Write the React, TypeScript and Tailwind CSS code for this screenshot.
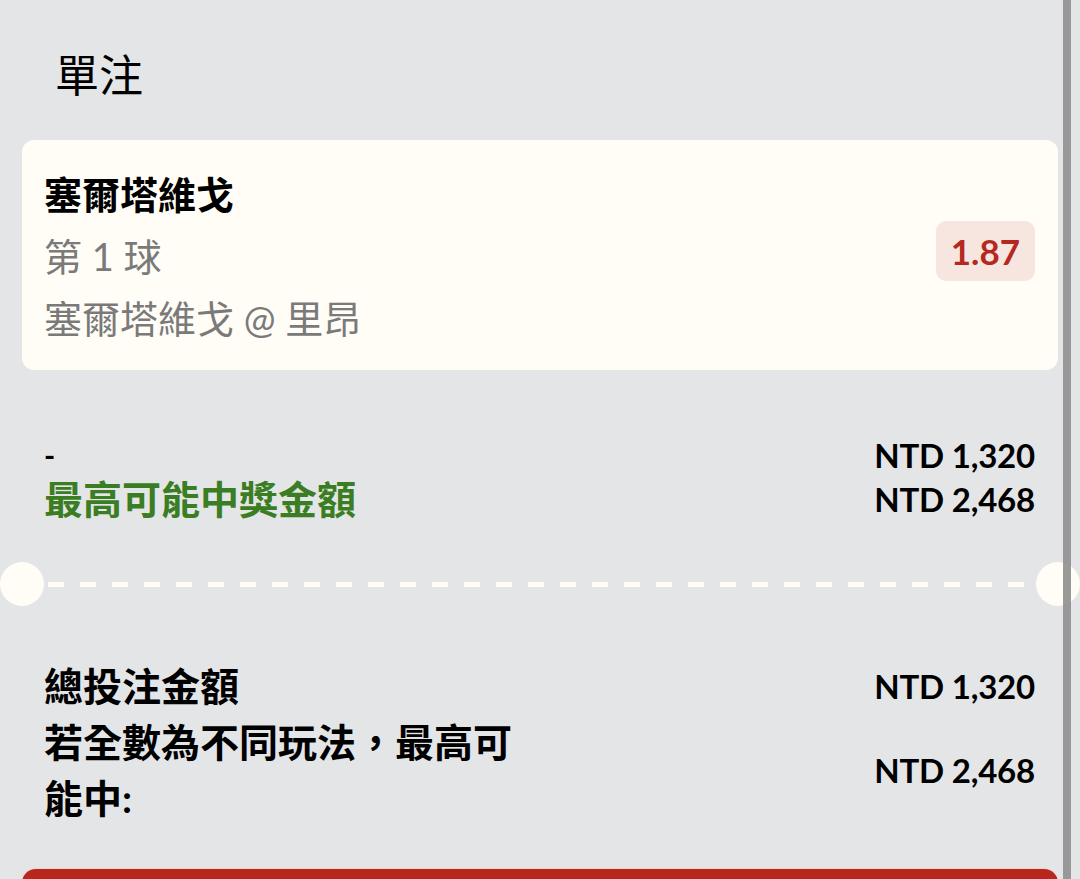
const latin = "font-['Lato','Noto_Sans_CJK_TC',sans-serif]"

const Amount = ({ children }: { children: React.ReactNode }) => (
  <span className="text-[33px] font-bold text-black tracking-[-0.2px]">{children}</span>
)

export default function App() {
  return (
    <div className={`relative h-[879px] overflow-hidden bg-[#e4e5e7] ${latin}`}>
      <div className="px-[22px]">
        <h1 className="pt-[45px] pl-[33px] text-[44px] leading-[60px] text-black font-normal">單注</h1>

        {/* selection card */}
        <div className="mt-[35px] flex items-center justify-between rounded-[12px] bg-[#fffdf5] pl-[22px] pr-[23px] pt-[23px] pb-[21px]">
          <div className="text-[38px] leading-[62px]">
            <div className="font-bold text-black">塞爾塔維戈</div>
            <div className="text-[#7a7a7a]">第 1 球</div>
            <div className="text-[#7a7a7a]">塞爾塔維戈 @ 里昂</div>
          </div>
          <div className="mb-[10px] rounded-[10px] bg-[#f6e6df] px-[15px] py-[6px] text-[35px] font-bold leading-[48px] text-[#b5281f]">
            1.87
          </div>
        </div>

        {/* potential win */}
        <div className="mt-[63px] flex justify-between pl-[22px] pr-[23px] leading-[44px]">
          <div className="text-[39px]">
            <div className="font-bold text-black text-[30px]">-</div>
            <div className="font-bold text-[#3b7d23]">最高可能中獎金額</div>
          </div>
          <div className="flex flex-col items-end">
            <Amount>NTD 1,320</Amount>
            <Amount>NTD 2,468</Amount>
          </div>
        </div>

        {/* ticket divider */}
        <div className="-mx-[22px] mt-[41px] flex items-center">
          <div className="h-[44px] w-[44px] shrink-0 rounded-full bg-[#fffdf5]" />
          <div className="mx-[4px] h-[5px] flex-1 bg-[repeating-linear-gradient(90deg,#fffdf5_0_16px,transparent_16px_32px)]" />
          <div className="h-[44px] w-[44px] shrink-0 rounded-full bg-[#fffdf5]" />
        </div>

        {/* totals */}
        <div className="mt-[52px] pl-[22px] pr-[23px] text-[39px] leading-[56px]">
          <div className="flex items-center justify-between">
            <span className="font-bold text-black">總投注金額</span>
            <Amount>NTD 1,320</Amount>
          </div>
          <div className="flex items-center justify-between">
            <span className="w-[480px] font-bold text-black">若全數為不同玩法，最高可能中:</span>
            <Amount>NTD 2,468</Amount>
          </div>
        </div>

        <div className="mt-[43px] h-[60px] rounded-t-[14px] bg-[#b7271d] shadow-[0_-1px_0_#f0d5c8]" />
      </div>

      {/* scrollbar */}
      <div className="absolute top-0 bottom-0 right-[9px] w-[8px] bg-[#8f8f8f]/90" />
    </div>
  )
}
